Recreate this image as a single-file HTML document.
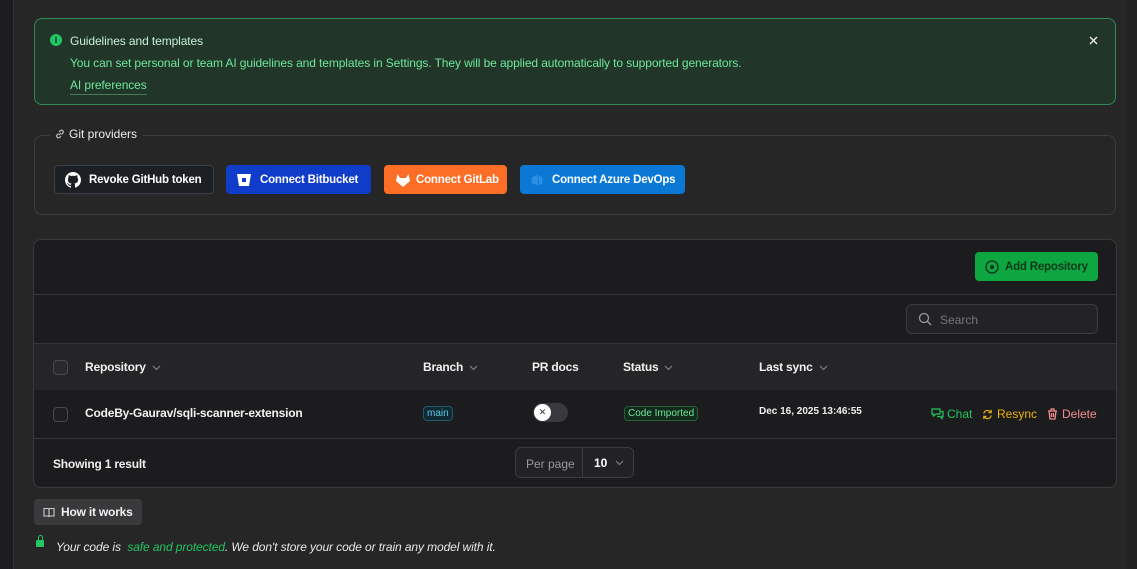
<!DOCTYPE html>
<html><head><meta charset="utf-8"><style>
*{box-sizing:border-box;margin:0;padding:0}
body{width:1137px;height:569px;background:#262626;font-family:"Liberation Sans",sans-serif;color:#e8e8e8;position:relative;overflow:hidden;font-size:12px}
.abs{position:absolute}
.strip{left:0;top:0;width:14px;height:569px;background:#1d1d1f;border-right:1px solid #333}
.rstrip{left:1127px;top:0;width:10px;height:569px;background:#222}
.alert{left:34px;top:18px;width:1082px;height:87px;background:#213529;border:1px solid #2f8a55;border-radius:8px}
.btn{position:absolute;top:165px;height:29px;border-radius:4px;display:flex;align-items:center;font-size:11.5px;font-weight:bold;color:#fff;gap:8px;padding-left:10px;white-space:nowrap;letter-spacing:-0.2px}
.card{left:33px;top:239px;width:1084px;height:249px;background:#1c1c1e;border:1px solid #3a3a3c;border-radius:8px;overflow:hidden}
.hline{position:absolute;left:0;width:100%;height:1px;background:#36363a}
.th{position:absolute;top:120px;font-weight:bold;font-size:12px;color:#f0f0f0;letter-spacing:-0.2px}
.cb{position:absolute;left:19px;width:15px;height:15px;border:1px solid #4a4a4e;border-radius:4px;background:#2a2a2d}
.chev{display:inline-block;margin-left:6px;vertical-align:middle}
</style></head><body>
<div class="abs strip"></div>
<div class="abs rstrip"></div>
<div class="abs alert">
 <div class="abs" style="left:15px;top:15px;width:12px;height:12px;border-radius:50%;background:#22c55e;color:#123;font-size:9px;font-weight:bold;text-align:center;line-height:12px">i</div>
 <div class="abs" style="left:35px;top:15px;font-size:12px;color:#c9f0d6;letter-spacing:-0.1px">Guidelines and templates</div>
 <div class="abs" style="left:35px;top:37px;font-size:12px;color:#6ee79a;letter-spacing:-0.1px">You can set personal or team AI guidelines and templates in Settings. They will be applied automatically to supported generators.</div>
 <div class="abs" style="left:35px;top:59px;font-size:12px;color:#6ee79a;border-bottom:1px solid #4a7a5c;padding-bottom:2px;letter-spacing:-0.1px">AI preferences</div>
 <svg class="abs" style="left:1054px;top:17px" width="9" height="9" viewBox="0 0 9 9"><path d="M1 1L8 8M8 1L1 8" stroke="#eee" stroke-width="1.4"/></svg>
</div>
<div class="abs" style="left:34px;top:135px;width:1082px;height:80px;border:1px solid #3c3c3e;border-radius:8px"></div>
<div class="abs" style="left:50px;top:127px;background:#262626;padding:0 6px 0 4px;font-size:12px;color:#eee;display:flex;align-items:center;gap:3px"><svg width="12" height="12" viewBox="0 0 12 12" fill="none" stroke="#bbb" stroke-width="1.2"><path d="M5 7L7 5M4.5 5.5L3 7a1.8 1.8 0 002.5 2.5L7 8M7.5 6.5L9 5A1.8 1.8 0 006.5 2.5L5 4"/></svg>Git providers</div>
<div class="btn" style="left:54px;width:160px;background:#1c1f24;border:1px solid #3b3f46"><svg width="16" height="16" viewBox="0 0 16 16"><path fill="#fff" d="M8 0C3.6 0 0 3.6 0 8c0 3.5 2.3 6.5 5.5 7.6.4.1.5-.2.5-.4v-1.4c-2.2.5-2.7-1-2.7-1-.4-.9-.9-1.2-.9-1.2-.7-.5.1-.5.1-.5.8.1 1.2.8 1.2.8.7 1.2 1.9.9 2.3.7.1-.5.3-.9.5-1.1-1.8-.2-3.6-.9-3.6-4 0-.9.3-1.6.8-2.1-.1-.2-.4-1 .1-2.1 0 0 .7-.2 2.2.8.6-.2 1.300-.3 2-.3s1.4.1 2 .3c1.5-1 2.2-.8 2.2-.8.4 1.1.2 1.9.1 2.1.5.6.8 1.3.8 2.1 0 3.1-1.9 3.7-3.6 3.9.3.3.5.8.5 1.5v2.2c0 .2.1.5.6.4C13.7 14.5 16 11.5 16 8c0-4.4-3.6-8-8-8z"/></svg>Revoke GitHub token</div>
<div class="btn" style="left:226px;width:145px;background:#0f3cc9"><svg width="16" height="16" viewBox="0 0 16 16"><path fill="#fff" d="M1 2h14l-2 12H3z"/><rect x="6" y="6" width="4" height="4" fill="#0f3cc9"/></svg>Connect Bitbucket</div>
<div class="btn" style="left:384px;width:123px;background:#fc6d26;gap:4px"><svg width="18" height="16" viewBox="0 0 16 16"><path fill="#fff" d="M8 15L1 9l1.5-7L5 6h6l2.5-4L15 9z"/></svg>Connect GitLab</div>
<div class="btn" style="left:520px;width:165px;background:#0a78d4"><svg width="14" height="14" viewBox="0 0 16 16"><path fill="#2b8fe6" d="M2 5l7-3v12l-7-2zM10 3l4 2v7l-4 2z"/></svg>Connect Azure DevOps</div>

<div class="abs card">
 <div class="abs" style="left:941px;top:12px;width:123px;height:29px;background:#0ea640;border-radius:4px;color:#0b3a1a;font-weight:bold;font-size:11.5px;display:flex;align-items:center;padding-left:10px;gap:6px;white-space:nowrap;letter-spacing:-0.2px"><svg width="14" height="14" viewBox="0 0 14 14" fill="none" stroke="#0b3a1a" stroke-width="1.4"><circle cx="7" cy="7" r="6"/><circle cx="7" cy="7" r="1.5" fill="#0b3a1a"/></svg>Add Repository</div>
 <div class="hline" style="top:54px"></div>
 <div class="abs" style="left:872px;top:64px;width:192px;height:30px;border:1px solid #3c3c40;border-radius:6px;background:#232326;color:#777;padding:8px 0 0 33px">Search
  <svg class="abs" style="left:11px;top:7px" width="14" height="14" viewBox="0 0 14 14"><circle cx="6" cy="6" r="4.5" stroke="#999" stroke-width="1.3" fill="none"/><path d="M9.5 9.5L13 13" stroke="#999" stroke-width="1.3"/></svg></div>
 <div class="hline" style="top:103px"></div>
 <div class="abs" style="left:0;top:104px;width:100%;height:46px;background:#252527"></div>
 <div class="cb" style="top:120px"></div>
 <div class="th" style="left:51px">Repository<svg class="chev" width="9" height="6" viewBox="0 0 9 6"><path d="M1 1l3.5 3.5L8 1" stroke="#888" fill="none"/></svg></div>
 <div class="th" style="left:389px">Branch<svg class="chev" width="9" height="6" viewBox="0 0 9 6"><path d="M1 1l3.5 3.5L8 1" stroke="#888" fill="none"/></svg></div>
 <div class="th" style="left:498px">PR docs</div>
 <div class="th" style="left:589px">Status<svg class="chev" width="9" height="6" viewBox="0 0 9 6"><path d="M1 1l3.5 3.5L8 1" stroke="#888" fill="none"/></svg></div>
 <div class="th" style="left:725px">Last sync<svg class="chev" width="9" height="6" viewBox="0 0 9 6"><path d="M1 1l3.5 3.5L8 1" stroke="#888" fill="none"/></svg></div>
 <div class="cb" style="top:167px;background:#1e1e21"></div>
 <div class="abs" style="left:51px;top:166px;font-weight:bold;color:#f2f2f2;letter-spacing:-0.2px">CodeBy-Gaurav/sqli-scanner-extension</div>
 <div class="abs" style="left:389px;top:166px;border:1px solid #1f5a6a;background:#0f2a33;color:#5cc8e6;border-radius:4px;font-size:10px;padding:1px 3px">main</div>
 <div class="abs" style="left:499px;top:163px;width:35px;height:19px;background:#3a3a3e;border-radius:10px"><div class="abs" style="left:1px;top:1px;width:17px;height:17px;border-radius:50%;background:#fff;color:#333;font-size:9px;text-align:center;line-height:17px">✕</div></div>
 <div class="abs" style="left:590px;top:166px;border:1px solid #23613a;background:#12291b;color:#6ee79a;border-radius:4px;font-size:10px;padding:1px 3px">Code Imported</div>
 <div class="abs" style="left:725px;top:166px;font-size:10px;font-weight:bold;color:#f0f0f0">Dec 16, 2025 13:46:55</div>
 <div class="abs" style="left:897px;top:167px;font-size:12px;color:#22c55e;display:flex;gap:3px;align-items:center"><svg width="13" height="12" viewBox="0 0 13 12" fill="none" stroke="#22c55e" stroke-width="1.2"><path d="M1 1h8v5H5L2.5 8V6H1zM10 3.5h2v5h-1v2L9 8.5H6"/></svg>Chat</div>
 <div class="abs" style="left:948px;top:167px;font-size:12px;color:#eab308;display:flex;gap:4px;align-items:center"><svg width="11" height="11" viewBox="0 0 12 12" fill="none" stroke="#eab308" stroke-width="1.3"><path d="M2 5a4 4 0 017-2l1 1M10 7a4 4 0 01-7 2L2 8M10 1v3H7M2 11V8h3"/></svg>Resync</div>
 <div class="abs" style="left:1013px;top:167px;font-size:12px;color:#f08c8c;display:flex;gap:4px;align-items:center"><svg width="11" height="12" viewBox="0 0 11 12" fill="none" stroke="#f08c8c" stroke-width="1.3"><path d="M1 3h9M4 3V1h3v2M2 3l1 8h5l1-8M4.5 5v4M6.5 5v4"/></svg>Delete</div>
 <div class="hline" style="top:198px"></div>
 <div class="abs" style="left:19px;top:217px;font-weight:bold;color:#eee;letter-spacing:-0.2px">Showing 1 result</div>
 <div class="abs" style="left:481px;top:207px;width:119px;height:31px;border:1px solid #3c3c40;border-radius:6px;background:#222225">
  <div class="abs" style="left:10px;top:9px;color:#999">Per page</div>
  <div class="abs" style="left:66px;top:0;width:1px;height:29px;background:#3c3c40"></div>
  <div class="abs" style="left:78px;top:8px;color:#fff;font-weight:bold">10</div>
  <svg class="abs" style="left:99px;top:12px" width="9" height="6" viewBox="0 0 9 6"><path d="M1 1l3.5 3.5L8 1" stroke="#888" fill="none"/></svg>
 </div>
</div>
<div class="abs" style="left:34px;top:499px;width:108px;height:26px;background:#3a3a3c;border-radius:4px;font-weight:bold;padding:0 0 0 9px;color:#f0f0f0;display:flex;align-items:center;gap:6px;letter-spacing:-0.2px"><svg width="12" height="11" viewBox="0 0 12 11" fill="none" stroke="#ccc" stroke-width="1.1"><path d="M1 1.5h3.5c.8 0 1.5.6 1.5 1.4V10c0-.6-.6-1-1.3-1H1zM11 1.5H7.5c-.8 0-1.5.6-1.5 1.4V10c0-.6.6-1 1.3-1H11z"/></svg>How it works</div>
<div class="abs" style="left:36px;top:540px;width:8px;height:7px;background:#22c55e;border-radius:1px"></div>
<div class="abs" style="left:37.5px;top:535px;width:5px;height:6px;border:1.5px solid #22c55e;border-bottom:none;border-radius:3px 3px 0 0"></div>
<div class="abs" style="left:56px;top:540px;font-style:italic;color:#e8e8e8;letter-spacing:-0.1px">Your code is &nbsp;<span style="color:#22c55e">safe and protected</span>. We don't store your code or train any model with it.</div>
</body></html>
